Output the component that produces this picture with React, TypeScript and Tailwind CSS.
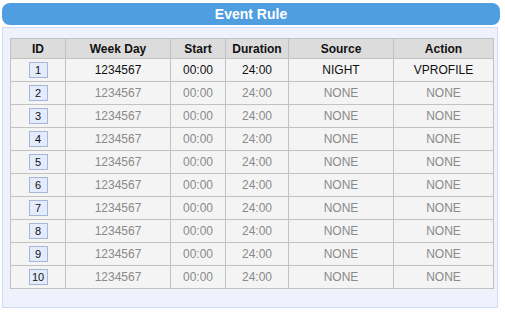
import React from "react";

const rows = Array.from({ length: 10 }, (_, i) => ({
  id: i + 1,
  week: "1234567",
  start: "00:00",
  dur: "24:00",
  source: i === 0 ? "NIGHT" : "NONE",
  action: i === 0 ? "VPROFILE" : "NONE",
}));

export default function App() {
  return (
    <div
      className="w-[505px] h-[315px] bg-white pt-[3px] pl-[2px]"
      style={{ fontFamily: '"Liberation Sans", Arial, sans-serif' }}
    >
      <div className="w-[498px] h-[22px] rounded-[8px] bg-[#4f9ee0] flex items-center justify-center text-white font-bold text-[14px]">
        Event Rule
      </div>
      <div className="mt-[2px] w-[496px] h-[281px] bg-[#eff1fd] border border-[#cfdcf5] pl-[7px] pt-[10px]">
        <table className="w-[483px] table-fixed border-collapse text-[12px]">
          <colgroup>
            <col className="w-[55px]" />
            <col className="w-[105px]" />
            <col className="w-[55px]" />
            <col className="w-[63px]" />
            <col className="w-[105px]" />
            <col className="w-[100px]" />
          </colgroup>
          <thead>
            <tr className="h-[20px] bg-[#dcdcdc] text-[#111]">
              {["ID", "Week Day", "Start", "Duration", "Source", "Action"].map((h) => (
                <th key={h} className="border border-[#c2c2c2] font-bold text-center p-0">
                  {h}
                </th>
              ))}
            </tr>
          </thead>
          <tbody>
            {rows.map((r) => {
              const c = r.id === 1 ? "text-[#111]" : "text-[#8a8a8a]";
              return (
                <tr key={r.id} className="h-[23px] bg-[#f4f4f4]">
                  <td className="border border-[#c2c2c2] p-0">
                    <div className="flex justify-center">
                      <span className="w-[19px] h-[16px] bg-[#e4ebfd] border border-[#a7b6d6] text-[11px] text-[#111] flex items-center justify-center">
                        {r.id}
                      </span>
                    </div>
                  </td>
                  <td className={`border border-[#c2c2c2] text-center p-0 ${c}`}>{r.week}</td>
                  <td className={`border border-[#c2c2c2] text-center p-0 ${c}`}>{r.start}</td>
                  <td className={`border border-[#c2c2c2] text-center p-0 ${c}`}>{r.dur}</td>
                  <td className={`border border-[#c2c2c2] text-center p-0 ${c}`}>{r.source}</td>
                  <td className={`border border-[#c2c2c2] text-center p-0 ${c}`}>{r.action}</td>
                </tr>
              );
            })}
          </tbody>
        </table>
      </div>
    </div>
  );
}
